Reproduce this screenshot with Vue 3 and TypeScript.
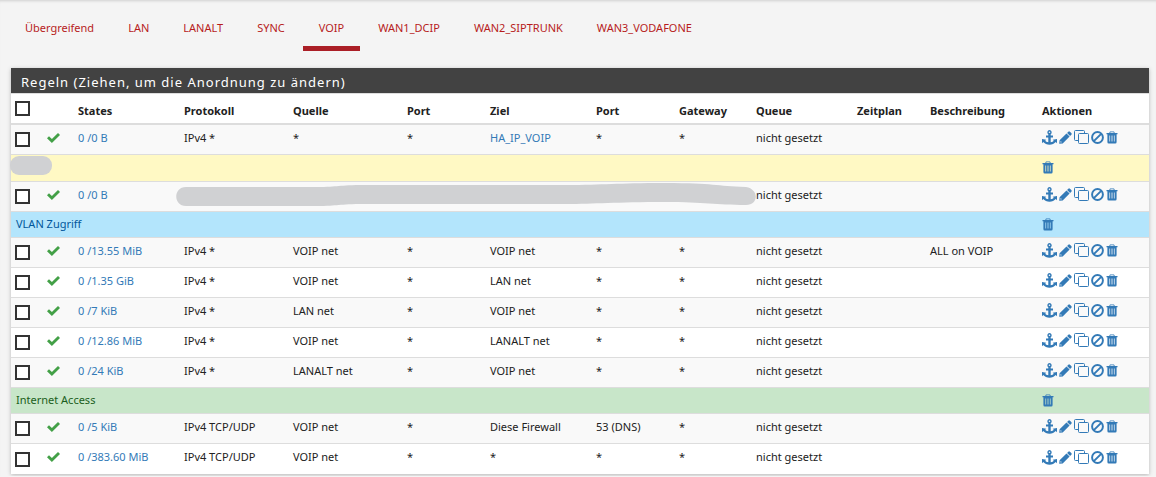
<script setup lang="ts">
interface Rule {
  kind: 'rule'
  states: string
  cells: string[]
  hidden?: boolean
  link?: boolean
  striped?: boolean
}
interface Separator {
  kind: 'separator'
  tone: 'yellow' | 'blue' | 'green'
  title: string
}

const tabs: string[] = ['Übergreifend', 'LAN', 'LANALT', 'SYNC', 'VOIP', 'WAN1_DCIP', 'WAN2_SIPTRUNK', 'WAN3_VODAFONE']
const activeTab = 'VOIP'
const columns: string[] = ['States', 'Protokoll', 'Quelle', 'Port', 'Ziel', 'Port', 'Gateway', 'Queue', 'Zeitplan', 'Beschreibung', 'Aktionen']

const unset = 'nicht gesetzt'
const rows: (Rule | Separator)[] = [
  { kind: 'rule', states: '0 /0 B', cells: ['IPv4 *', '*', '*', 'HA_IP_VOIP', '*', '*', unset, '', ''], link: true, striped: true },
  { kind: 'separator', tone: 'yellow', title: '' },
  { kind: 'rule', states: '0 /0 B', cells: [unset, '', ''], hidden: true, striped: true },
  { kind: 'separator', tone: 'blue', title: 'VLAN Zugriff' },
  { kind: 'rule', states: '0 /13.55 MiB', cells: ['IPv4 *', 'VOIP net', '*', 'VOIP net', '*', '*', unset, '', 'ALL on VOIP'], striped: true },
  { kind: 'rule', states: '0 /1.35 GiB', cells: ['IPv4 *', 'VOIP net', '*', 'LAN net', '*', '*', unset, '', ''] },
  { kind: 'rule', states: '0 /7 KiB', cells: ['IPv4 *', 'LAN net', '*', 'VOIP net', '*', '*', unset, '', ''], striped: true },
  { kind: 'rule', states: '0 /12.86 MiB', cells: ['IPv4 *', 'VOIP net', '*', 'LANALT net', '*', '*', unset, '', ''] },
  { kind: 'rule', states: '0 /24 KiB', cells: ['IPv4 *', 'LANALT net', '*', 'VOIP net', '*', '*', unset, '', ''], striped: true },
  { kind: 'separator', tone: 'green', title: 'Internet Access' },
  { kind: 'rule', states: '0 /5 KiB', cells: ['IPv4 TCP/UDP', 'VOIP net', '*', 'Diese Firewall', '53 (DNS)', '*', unset, '', ''], striped: true },
  { kind: 'rule', states: '0 /383.60 MiB', cells: ['IPv4 TCP/UDP', 'VOIP net', '*', '*', '*', '*', unset, '', ''] },
]

const actions = [
  { icon: 'anchor', label: 'Anker' },
  { icon: 'pencil', label: 'Bearbeiten' },
  { icon: 'clone', label: 'Kopieren' },
  { icon: 'ban', label: 'Deaktivieren' },
  { icon: 'trash', label: 'Löschen' },
]
</script>

<template>
  <svg class="sprite" aria-hidden="true">
    <symbol id="anchor" viewBox="0 0 15 15">
      <path fill-rule="evenodd" d="M7.5 0a2.3 2.3 0 0 1 1.2 4.200V5.500H11v2H8.700v4.800c1.500-.2 2.500-.8 3.100-1.500L10.700 9.700 15 9v4.200l-1.300-1.100C12.400 13.800 10 14.700 7.500 14.700S2.600 13.800 1.300 12.100L0 13.200V9l4.300.7-1.100 1.100c.6.7 1.600 1.300 3.100 1.500V7.500H4v-2h2.300V4.200A2.300 2.300 0 0 1 7.500 0zm0 1.500a.8.8 0 1 0 0 1.600.8.8 0 0 0 0-1.600z" />
    </symbol>
    <symbol id="pencil" viewBox="0 0 13 13">
      <path d="M9.300.7q.8-.8 1.600 0l1.400 1.400q.8.8 0 1.600l-1.200 1.200L8.100 1.900z" />
      <path fill-rule="evenodd" d="M7.500 2.400l3.100 3.100-6.900 6.900L.2 12.800.600 9.300zM1.700 10l-.3 1.500 1.500-.3z" />
    </symbol>
    <symbol id="clone" viewBox="0 0 15 15">
      <path fill="none" stroke="currentColor" d="M4 10.500H1.500a1 1 0 0 1-1-1v-8a1 1 0 0 1 1-1h8a1 1 0 0 1 1 1V3.500M5.500 3.500h8a1 1 0 0 1 1 1v8a1 1 0 0 1-1 1h-8a1 1 0 0 1-1-1v-8a1 1 0 0 1 1-1z" />
    </symbol>
    <symbol id="ban" viewBox="0 0 12 12">
      <path fill="none" stroke="currentColor" stroke-width="1.800" d="M6 1a5 5 0 1 1 0 10A5 5 0 0 1 6 1zM2.600 9.400l6.800-6.800" />
    </symbol>
    <symbol id="trash" viewBox="0 0 12 13">
      <path fill-rule="evenodd" d="M4 .5h4l.8 1.500H11.500v1.300h-.9V11q0 1.500-1.300 1.500H2.700Q1.400 12.500 1.400 11V3.300H.5V2h2.700zM4.500 1.300L4.200 2h3.600l-.3-.7zM3.400 4.600v6h.7v-6zM5.600 4.600v6h.8v-6zM7.900 4.600v6h.7v-6z" />
    </symbol>
  </svg>

  <main class="page">
    <nav class="tabs">
      <a v-for="tab in tabs" :key="tab" href="#" :class="['tab', { active: tab === activeTab }]">{{ tab }}</a>
    </nav>

    <section class="panel">
      <h2 class="heading">Regeln (Ziehen, um die Anordnung zu ändern)</h2>
      <table class="rules">
        <colgroup>
          <col class="w-box" /><col class="w-box" /><col class="w-states" /><col class="w-proto" /><col class="w-source" />
          <col class="w-port" /><col class="w-target" /><col class="w-port" /><col class="w-gateway" /><col class="w-queue" />
          <col class="w-plan" /><col class="w-wide" /><col class="w-wide" />
        </colgroup>
        <thead>
          <tr>
            <th class="box"><input type="checkbox" aria-label="Alle auswählen" /></th>
            <th></th>
            <th v-for="(column, i) in columns" :key="i" scope="col">{{ column }}</th>
          </tr>
        </thead>
        <tbody>
          <template v-for="(row, r) in rows" :key="r">
            <tr v-if="row.kind === 'separator'" :class="['separator', row.tone]">
              <td colspan="12">
                {{ row.title }}
                <span v-if="!row.title" class="blot"></span>
              </td>
              <td>
                <div class="actions">
                  <button type="button" aria-label="Löschen"><svg class="icon trash"><use href="#trash" /></svg></button>
                </div>
              </td>
            </tr>
            <tr v-else :class="{ striped: row.striped }">
              <td class="box"><input type="checkbox" :aria-label="'Regel ' + row.states" /></td>
              <td>
                <svg class="tick" viewBox="0 0 13 10"><path d="M0 5.300L2 3.300l2.900 2.800L11 0l2 2-8.100 8z" /></svg>
              </td>
              <td><a href="#">{{ row.states }}</a></td>
              <td v-if="row.hidden" colspan="6" class="hidden-cells">
                <svg class="smear" viewBox="0 0 581 24" preserveAspectRatio="none">
                  <path d="M10 4H140C165 4 160 2 190 2H390C430 2 440 0 490 0 540 0 540 3 571 4 584 6 584 22 571 22 540 22 530 19 490 19 440 19 420 21 390 21H190C160 21 165 23 140 23H10C-3 23-3 4 10 4z" />
                </svg>
              </td>
              <td v-for="(cell, c) in row.cells" :key="c">
                <a v-if="row.link && c === 3" href="#">{{ cell }}</a>
                <template v-else>{{ cell }}</template>
              </td>
              <td>
                <div class="actions">
                  <button v-for="action in actions" :key="action.icon" type="button" :aria-label="action.label">
                    <svg :class="['icon', action.icon]"><use :href="'#' + action.icon" /></svg>
                  </button>
                </div>
              </td>
            </tr>
          </template>
        </tbody>
      </table>
    </section>
  </main>
</template>

<style>
body {
  background: #f4f4f4;
}
</style>

<style scoped>
* {
  box-sizing: border-box;
}
.sprite {
  position: absolute;
  width: 0;
  height: 0;
}
.page {
  font: 11px/18px "Noto Sans", "Open Sans", sans-serif;
  color: #212121;
  padding: 0 7px 2px 11px;
  box-shadow: inset 0 3px 3px -2px #d0d0d0;
}
a {
  color: #337ab7;
  text-decoration: none;
}
.tabs {
  display: flex;
  gap: 2px;
  padding-top: 5px;
  margin-bottom: 17px;
}
.tab {
  color: #b71c1c;
  padding: 14px 16px 9px;
  border-bottom: 5px solid transparent;
}
.tab:first-child {
  padding-left: 14px;
}
.tab.active {
  border-bottom-color: #ab1f26;
}
.panel {
  background: #fff;
  box-shadow: 0 1px 4px rgba(0, 0, 0, 0.25);
}
.heading {
  margin: 0;
  padding: 5px 10px 2px;
  background: #424242;
  color: #fff;
  font-size: 13px;
  font-weight: 400;
  line-height: 18px;
  letter-spacing: 1px;
}
.rules {
  width: 100%;
  table-layout: fixed;
  border-collapse: separate;
  border-spacing: 0;
}
.w-box { width: 31px; }
.w-states { width: 106px; }
.w-proto { width: 109px; }
.w-source { width: 114px; }
.w-port { width: 83px; }
.w-target { width: 106px; }
.w-gateway { width: 77px; }
.w-queue { width: 101px; }
.w-plan { width: 73px; }
.w-wide { width: 112px; }
th,
td {
  height: 30px;
  padding: 3px 5px 7px;
  text-align: left;
  vertical-align: middle;
  white-space: nowrap;
  border-top: 1px solid #ddd;
}
th {
  height: 31px;
  padding: 7px 5px 3px;
  border-bottom: 1px solid #ddd;
}
.striped {
  background: #f9f9f9;
}
tbody tr:last-child td {
  height: 31px;
}
.separator td {
  height: 26px;
  padding: 3px 5px 4px;
  position: relative;
}
.yellow { background: #fff9c4; }
.yellow td { height: 27px; }
.blue { background: #b3e5fc; color: #01579b; }
.green { background: #c8e6c9; color: #1b5e20; }
th.box {
  padding: 4px;
}
td.box {
  padding: 5px 4px;
}
input {
  appearance: none;
  display: block;
  width: 15px;
  height: 15px;
  margin: 0;
  border: 2px solid #333;
  background: #fff;
}
.tick {
  display: block;
  width: 13px;
  height: 10px;
  fill: #43a047;
}
.actions {
  display: flex;
  align-items: center;
  gap: 2px;
  color: #337ab7;
}
button {
  display: flex;
  padding: 0;
  border: 0;
  background: none;
  color: inherit;
}
.icon {
  width: 15px;
  height: 15px;
  fill: currentColor;
}
.icon.pencil { width: 13px; height: 13px; }
.icon.ban { width: 13px; height: 13px; }
.icon.trash { width: 12px; height: 13px; }
.blot {
  position: absolute;
  left: -1px;
  top: 1px;
  width: 42px;
  height: 19px;
  border-radius: 9px;
  background: #d0d1d3;
}
.hidden-cells {
  position: relative;
}
.smear {
  position: absolute;
  left: -3px;
  top: 1px;
  width: calc(100% + 8px);
  height: 24px;
  fill: #d0d1d3;
}
</style>
